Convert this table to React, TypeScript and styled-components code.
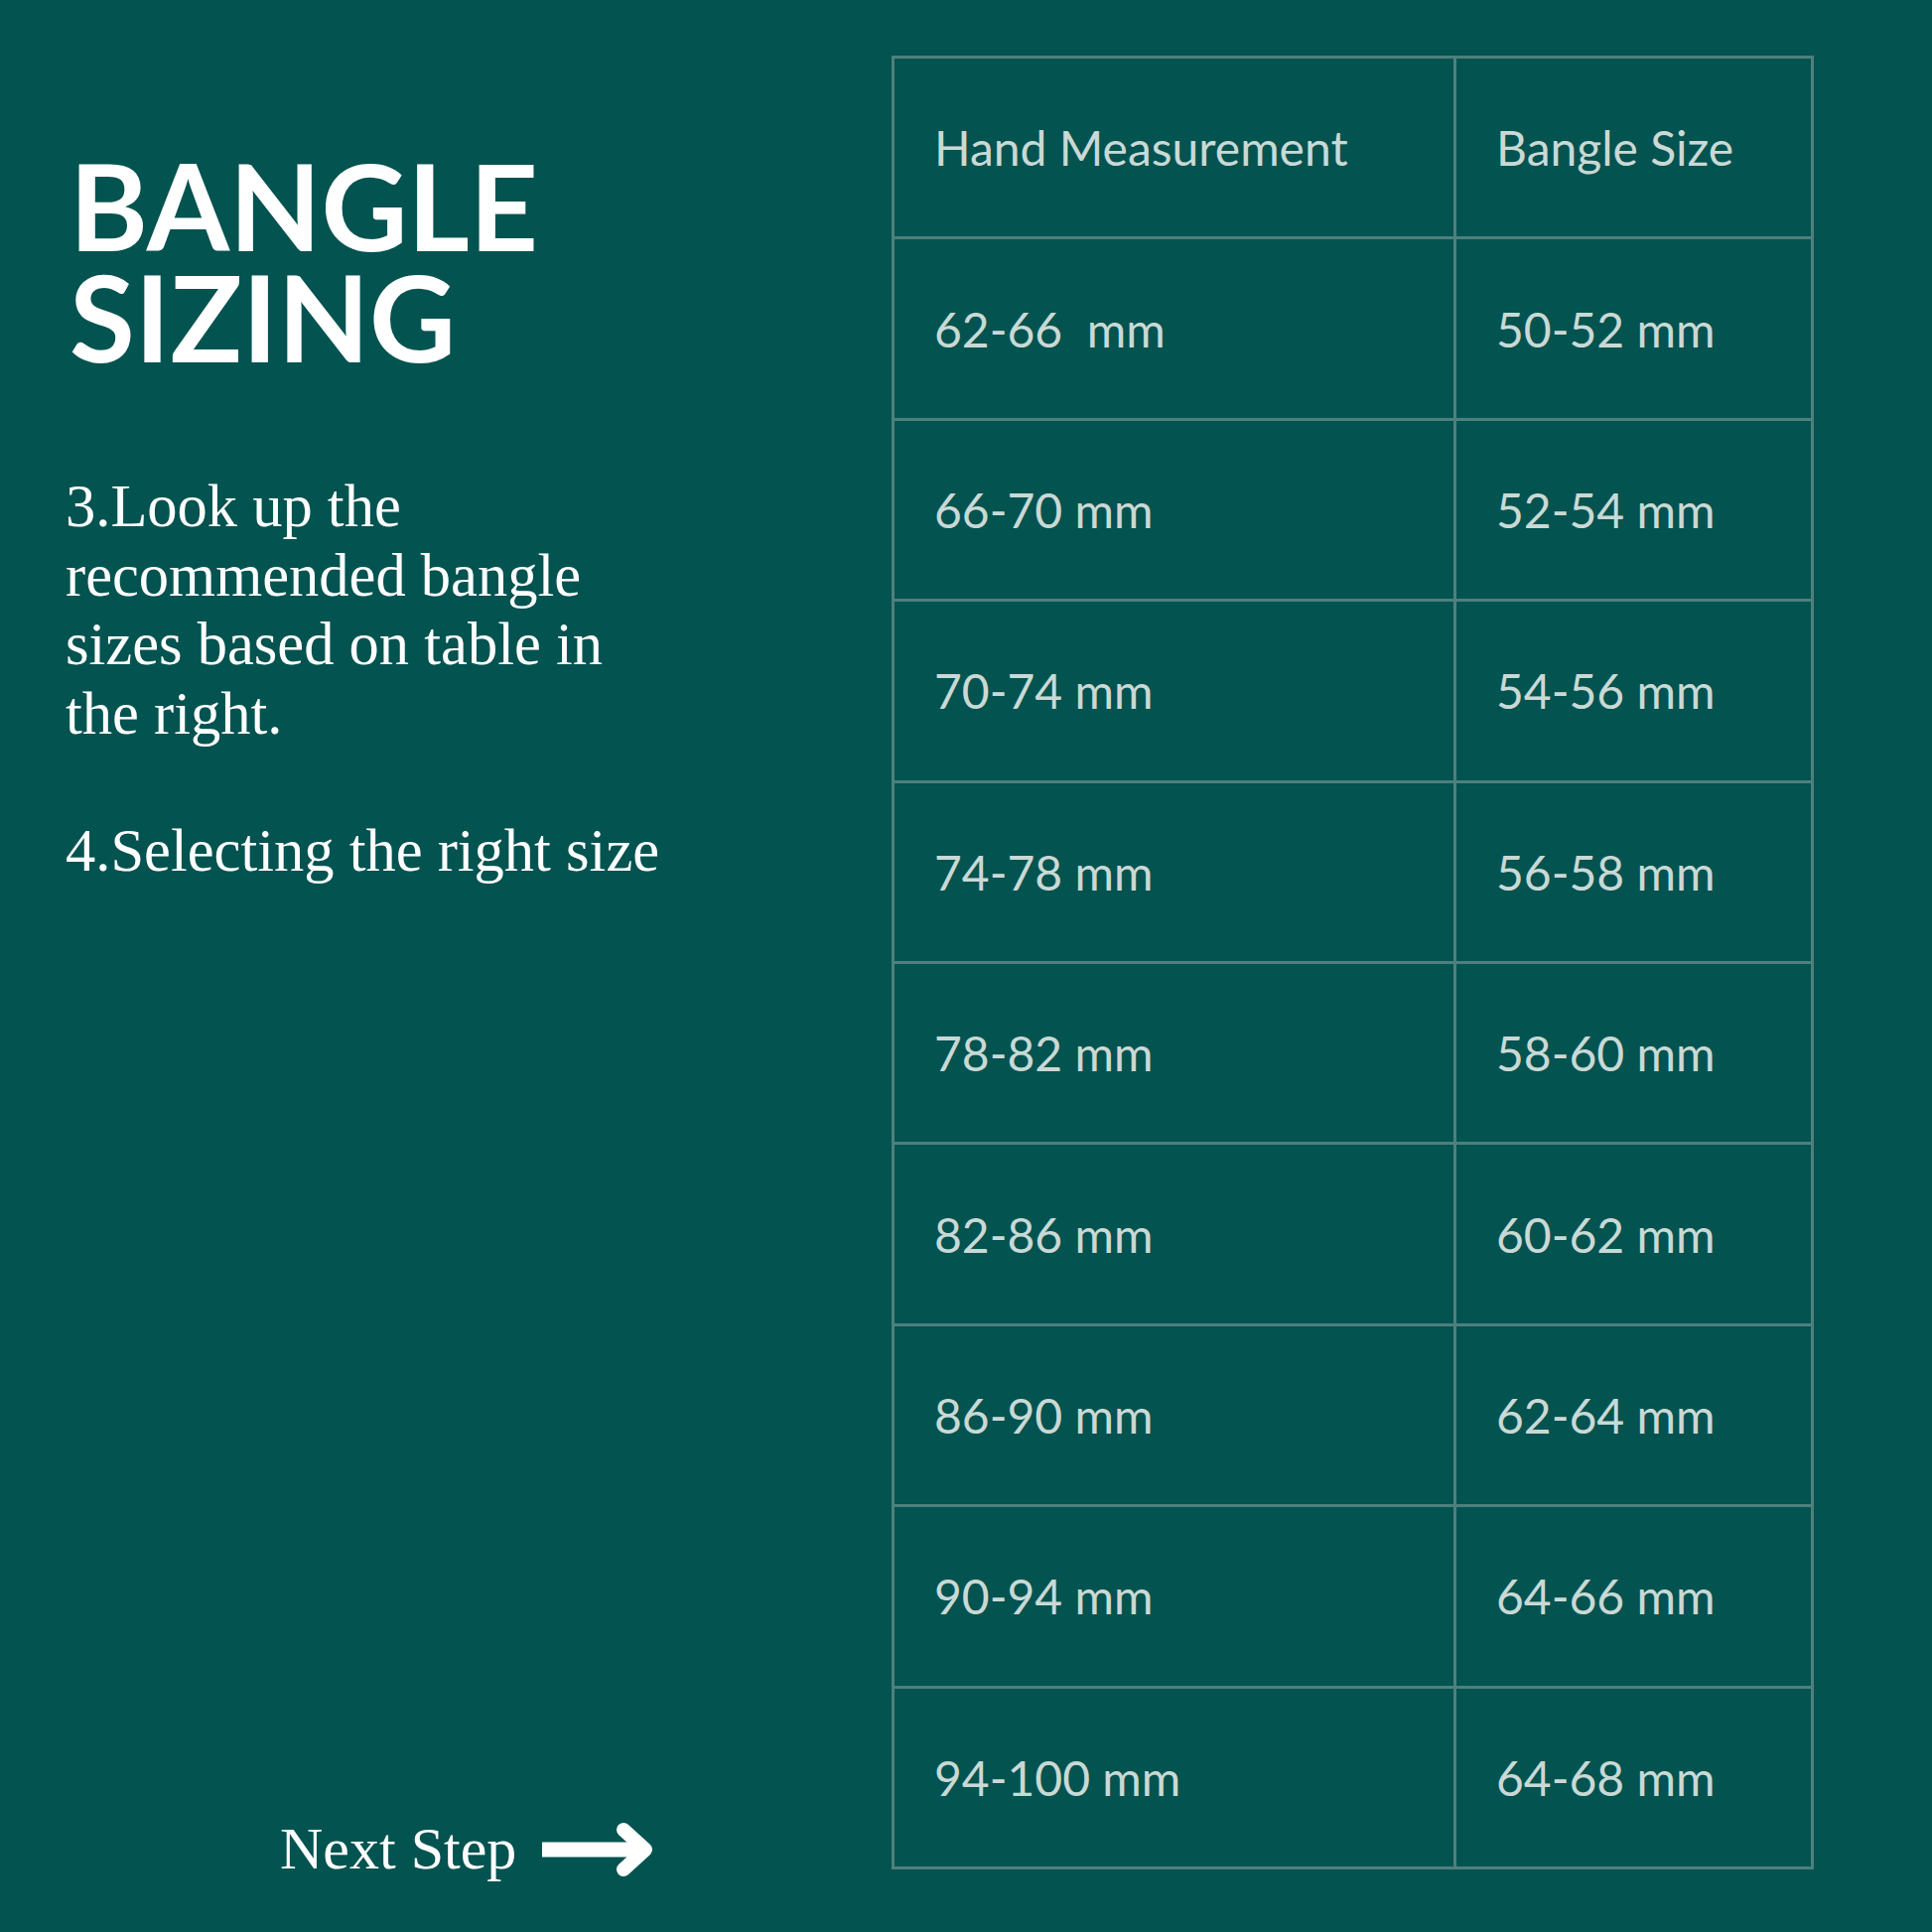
import React from 'react';
import styled, { createGlobalStyle } from 'styled-components';

const GlobalStyle = createGlobalStyle`
    html, body {
        margin: 0;
        padding: 0;
        background: #035350;
    }
`;

const Page = styled.div`
    width: 1946px;
    height: 1946px;
    background: #035350;
    display: flex;
    box-sizing: border-box;
`;

const LeftColumn = styled.div`
    width: 898px;
    height: 100%;
    display: flex;
    flex-direction: column;
    box-sizing: border-box;
    padding: 151px 0 49px 66px;
`;

const Title = styled.h1`
    margin: 0;
    font-family: Lato, 'Noto Sans', sans-serif;
    font-weight: 700;
    font-size: 120px;
    line-height: 112px;
    color: #ffffff;
    padding-left: 4px;
`;

const Step = styled.p`
    margin: 0;
    font-family: 'Liberation Serif', serif;
    font-size: 60.5px;
    line-height: 69.5px;
    color: #ffffff;
    width: 612px;
`;

const Steps = styled.div`
    margin-top: 100px;
    display: flex;
    flex-direction: column;
    gap: 69px;
`;

const NextRow = styled.div`
    margin-top: auto;
    padding-left: 216px;
    display: flex;
    align-items: center;
    gap: 26px;
    font-family: 'Liberation Serif', serif;
    font-size: 60px;
    line-height: 69px;
    color: #ffffff;
`;

const RightColumn = styled.div`
    padding-top: 56px;
`;

const Table = styled.table`
    border-collapse: collapse;
    table-layout: fixed;
    width: 926px;
    border: 3px solid #4f807c;
`;

const Cell = styled.td<{ $wide?: boolean }>`
    width: ${p => (p.$wide ? '566px' : '360px')};
    height: 182.4px;
    box-sizing: border-box;
    padding: 0 0 0 40px;
    border: 3px solid #4f807c;
    font-family: Lato, 'Open Sans', sans-serif;
    font-size: 48px;
    color: #c9d9d5;
    white-space: pre;
    vertical-align: middle;
`;

const rows: [string, string][] = [
    ['Hand Measurement', 'Bangle Size'],
    ['62-66  mm', '50-52 mm'],
    ['66-70 mm', '52-54 mm'],
    ['70-74 mm', '54-56 mm'],
    ['74-78 mm', '56-58 mm'],
    ['78-82 mm', '58-60 mm'],
    ['82-86 mm', '60-62 mm'],
    ['86-90 mm', '62-64 mm'],
    ['90-94 mm', '64-66 mm'],
    ['94-100 mm', '64-68 mm'],
];

const Arrow = () => (
    <svg width="112" height="54" viewBox="0 0 112 54">
        <rect x="0" y="19.5" width="100" height="15" fill="#ffffff" />
        <polyline
            points="82,7 104,27 82,47"
            fill="none"
            stroke="#ffffff"
            strokeWidth="14"
            strokeLinecap="round"
            strokeLinejoin="round"
        />
    </svg>
);

const App = () => (
    <Page>
        <GlobalStyle />
        <LeftColumn>
            <Title>
                BANGLE
                <br />
                SIZING
            </Title>
            <Steps>
                <Step>3.Look up the recommended bangle sizes based on table in the right.</Step>
                <Step>4.Selecting the right size</Step>
            </Steps>
            <NextRow>
                <span>Next Step</span>
                <Arrow />
            </NextRow>
        </LeftColumn>
        <RightColumn>
            <Table>
                <tbody>
                    {rows.map(([hand, bangle]) => (
                        <tr key={hand}>
                            <Cell $wide>{hand}</Cell>
                            <Cell>{bangle}</Cell>
                        </tr>
                    ))}
                </tbody>
            </Table>
        </RightColumn>
    </Page>
);

export default App;
